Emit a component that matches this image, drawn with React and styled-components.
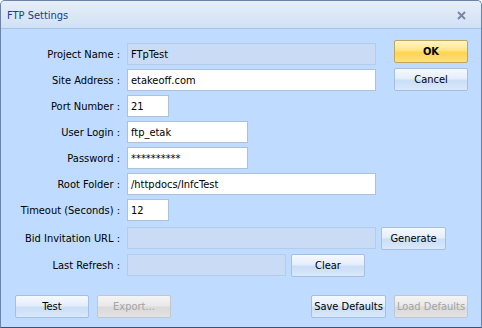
import React from 'react'
import styled, { createGlobalStyle, css } from 'styled-components'

const GlobalStyle = createGlobalStyle`
	html, body {
		margin: 0;
		padding: 0;
		background: #ffffff;
	}
	* {
		box-sizing: border-box;
	}
`

const fields = [
	{ label: 'Project Name :', value: 'FTpTest', width: 249, disabled: true, side: 'OK', sideTop: -3 },
	{ label: 'Site Address :', value: 'etakeoff.com', width: 249, side: 'Cancel', sideTop: -1 },
	{ label: 'Port Number :', value: '21', width: 42 },
	{ label: 'User Login :', value: 'ftp_etak', width: 121 },
	{ label: 'Password :', value: '**********', width: 121 },
	{ label: 'Root Folder :', value: '/httpdocs/InfcTest', width: 249 },
	{ label: 'Timeout (Seconds) :', value: '12', width: 42 },
	{ label: 'Bid Invitation URL :', value: '', width: 249, disabled: true, action: 'Generate', actionWidth: 65, top: 2 },
	{ label: 'Last Refresh :', value: '', width: 159, disabled: true, action: 'Clear', actionWidth: 74, top: 1 },
]

const App = () => {
	return (
		<>
			<GlobalStyle/>
			<Window>
				<TitleBar>
					<Title>FTP Settings</Title>
					<CloseButton>
						<svg width="9" height="9" viewBox="0 0 9 9">
							<path d="M1 1 L8 8 M8 1 L1 8" stroke="#7686a0" strokeWidth="1.8"/>
						</svg>
					</CloseButton>
				</TitleBar>
				<Body>
					<Form>
						{fields.map(f => (
							<Row key={f.label} $top={f.top}>
								<Label>{f.label}</Label>
								<Field $width={f.width} $disabled={f.disabled}>{f.value}</Field>
								{f.action && <Button $width={f.actionWidth} $gap={5}>{f.action}</Button>}
								{f.side && (
									<SideButton $primary={f.side === 'OK'} $top={f.sideTop}>{f.side}</SideButton>
								)}
							</Row>
						))}
					</Form>
					<Footer>
						<ButtonGroup>
							<Button $width={74}>Test</Button>
							<Button $width={74} $disabled>Export...</Button>
						</ButtonGroup>
						<ButtonGroup>
							<Button $width={75}>Save Defaults</Button>
							<Button $width={74} $disabled>Load Defaults</Button>
						</ButtonGroup>
					</Footer>
				</Body>
			</Window>
		</>
	)
}

const Window = styled.div`
	width: 482px;
	height: 328px;
	display: flex;
	flex-direction: column;
	border: 1px solid #6a83a6;
	border-bottom-color: #3d5273;
	border-radius: 5px 5px 0 0;
	background: #bfdbff;
	font-family: "DejaVu Sans Condensed", "Liberation Sans", sans-serif;
	font-size: 11px;
	color: #000000;
	overflow: hidden;
`

const TitleBar = styled.div`
	height: 28px;
	flex-shrink: 0;
	display: flex;
	align-items: center;
	justify-content: space-between;
	padding: 0 15px 0 6px;
	background: linear-gradient(to bottom, #e6eefa 0%, #dde8f7 45%, #d0e1f5 100%);
	border-bottom: 1px solid #a7c2e6;
`

const Title = styled.span`
	color: #15428b;
	font-size: 11px;
	padding-top: 2px;
`

const CloseButton = styled.span`
	display: flex;
	align-items: center;
	padding-top: 1px;
`

const Body = styled.div`
	flex: 1;
	display: flex;
	flex-direction: column;
	padding: 14px 13px 9px 0;
`

const Form = styled.div`
	display: flex;
	flex-direction: column;
	gap: 4px;
`

const Row = styled.div`
	height: 22px;
	display: flex;
	align-items: flex-start;
	margin-top: ${p => p.$top || 0}px;
`

const Label = styled.div`
	width: 120px;
	height: 22px;
	flex-shrink: 0;
	display: flex;
	align-items: center;
	justify-content: flex-end;
	padding-right: 1px;
	white-space: nowrap;
`

const Field = styled.div`
	width: ${p => p.$width}px;
	height: 22px;
	margin-left: 6px;
	padding: 0 3px;
	display: flex;
	align-items: center;
	border: 1px solid ${p => p.$disabled ? '#b4cbea' : '#abc1de'};
	background: ${p => p.$disabled ? '#cadcf5' : '#ffffff'};
	white-space: nowrap;
`

const buttonLook = css`
	height: 23px;
	flex-shrink: 0;
	display: flex;
	align-items: center;
	justify-content: center;
	border-radius: 2px;
	white-space: nowrap;
	border: 1px solid #a5bfe1;
	background: linear-gradient(to bottom, #f6f9fe 0%, #e4eefb 45%, #cadef7 55%, #dae8fa 100%);
	color: #000000;
`

const Button = styled.div`
	${buttonLook};
	width: ${p => p.$width}px;
	margin-left: ${p => p.$gap || 0}px;
	${p => p.$disabled && css`
		border-color: #c3c6cb;
		background: linear-gradient(to bottom, #f5f5f5 0%, #e9e9e9 45%, #dadada 55%, #e3e3e3 100%);
		color: #a3a3a3;
	`}
`

const SideButton = styled.div`
	${buttonLook};
	width: 74px;
	margin-left: auto;
	margin-top: ${p => p.$top || 0}px;
	${p => p.$primary && css`
		font-weight: bold;
		border-color: #c2a55f;
		background: linear-gradient(to bottom, #fff5c8 0%, #ffe485 45%, #ffd450 55%, #ffe07a 100%);
	`}
`

const Footer = styled.div`
	margin-top: auto;
	display: flex;
	justify-content: space-between;
	padding-left: 14px;
`

const ButtonGroup = styled.div`
	display: flex;
	gap: 8px;
`

export default App
